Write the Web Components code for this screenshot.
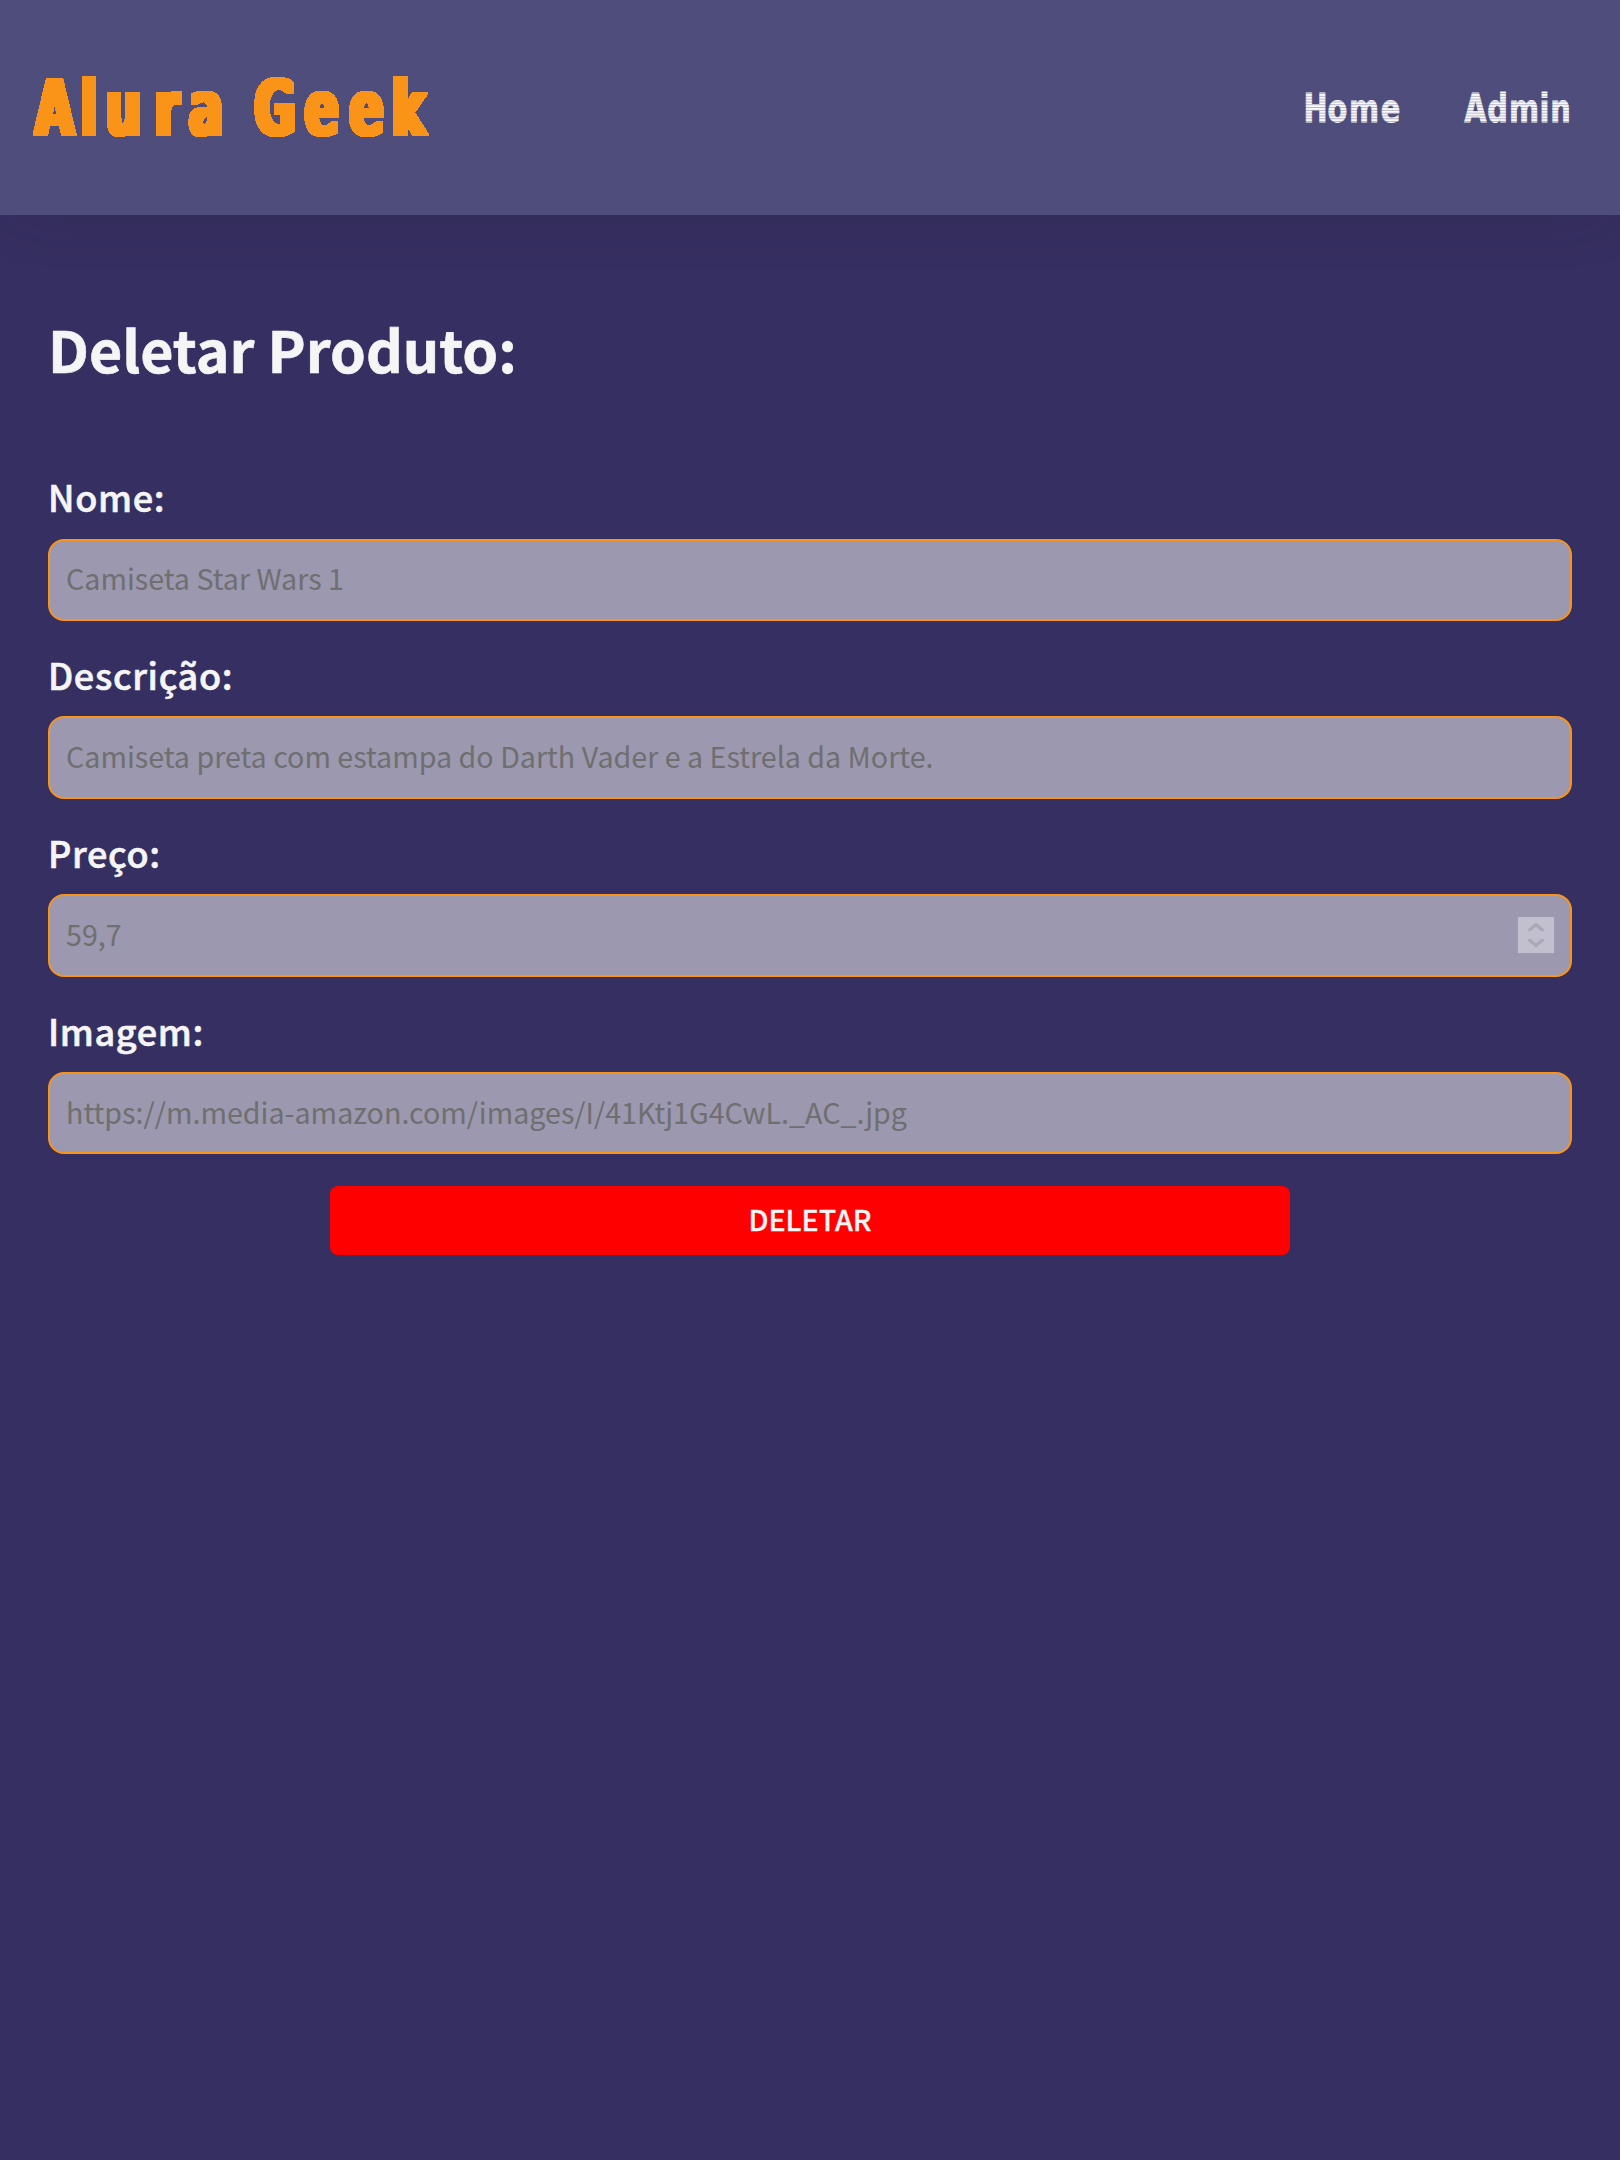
<!DOCTYPE html>
<html lang="pt-BR">
<head>
<meta charset="utf-8">
<title>Alura Geek</title>
<style>
body{margin:0;min-height:2160px;background:#362f61;color:#f5f5f5;font-family:"Noto Sans CJK JP","Noto Sans",sans-serif}
</style>
</head>
<body>
<geek-header></geek-header>
<product-form heading="Deletar Produto:">
<form-field label="Nome:" value="Camiseta Star Wars 1"></form-field>
<form-field label="Descrição:" value="Camiseta preta com estampa do Darth Vader e a Estrela da Morte."></form-field>
<form-field label="Preço:" value="59,7" spinner></form-field>
<form-field label="Imagem:" value="https://m.media-amazon.com/images/I/41Ktj1G4CwL._AC_.jpg"></form-field>
<action-button slot="action">DELETAR</action-button>
</product-form>
<script>
/* Glyph centres along the line, divided by the horizontal squeeze. */
const spots=(squeeze,list)=>list.map(v=>(v/squeeze).toFixed(2)).join(' ');
/* Menu word filled with thin scan lines. */
const scanWord=(word,width,centres)=>`<svg width="${width+20}" height="56" viewBox="-10 -4 ${width+20} 56"><defs><pattern id="scan-${word}" width="4" height="2.8" patternUnits="userSpaceOnUse" y="12"><rect width="4" height="2.8" fill="#9e9db7"/><rect width="4" height="2.1" fill="#f9f9f9"/></pattern></defs><text transform="scale(.84 1)" y="40" font-size="38.2" fill="url(#scan-${word})" stroke="url(#scan-${word})" stroke-width=".8" x="${spots(.84,centres)}">${word}</text></svg>`;
class GeekHeader extends HTMLElement{
  constructor(){super();this.attachShadow({mode:'open'}).innerHTML=`<style>
:host{display:flex;justify-content:space-between;align-items:flex-start;box-sizing:border-box;height:215px;padding:58px 40px 0 24px;background:#4f4d7c;box-shadow:0 16px 50px -10px rgba(30,30,40,.12)}
svg{display:block}
text{font-family:"DejaVu Sans Condensed","DejaVu Sans",sans-serif;font-stretch:condensed;font-weight:bold;text-anchor:middle}
nav{display:flex;gap:42px;padding-top:20px}
</style>
<svg width="430" height="104" viewBox="-10 -10 430 104">
<filter id="blocky" filterUnits="userSpaceOnUse" x="-10" y="-10" width="430" height="104" color-interpolation-filters="sRGB"><feMorphology operator="dilate" radius="3 1"/><feComponentTransfer><feFuncA type="discrete" tableValues="0 1"/></feComponentTransfer></filter>
<g filter="url(#blocky)"><text transform="scale(.73 1)" y="67" font-size="76" fill="#fa9418" x="${spots(.73,[20.5,55,89.5,133,172,206,241,288,332.5,374.5])}">Alura Geek</text></g></svg>
<nav>${scanWord('Home',98,[11.5,33.5,60,86.5])}${scanWord('Admin',106,[11.5,33.5,60,80.5,96.5])}</nav>`}
}
class ProductForm extends HTMLElement{
  constructor(){super();this.attachShadow({mode:'open'}).innerHTML=`<style>
:host{display:block;padding:94px 48px 0}
h1{margin:0 0 86px;font-size:57.3px;line-height:80px;font-weight:700;-webkit-text-stroke:.6px #f5f5f5}
section{display:flex;flex-direction:column;gap:32px}
</style><h1></h1><section><slot></slot><slot name="action"></slot></section>`}
  connectedCallback(){this.shadowRoot.querySelector('h1').textContent=this.getAttribute('heading')}
}
class FormField extends HTMLElement{
  constructor(){super();this.attachShadow({mode:'open'}).innerHTML=`<style>
:host{display:flex;flex-direction:column;justify-content:space-between;height:145.85px}
label{font-size:36.1px;line-height:43px;font-weight:500;letter-spacing:.65px;-webkit-text-stroke:.6px #f5f5f5}
.box{display:flex;align-items:center;justify-content:space-between;box-sizing:border-box;height:82.25px;padding:0 16px;border:2px solid #fa9418;border-radius:16px;background:#9b98b0;color:#6f6f6f;font-size:28.65px;line-height:40px;white-space:nowrap}
.box span{padding-bottom:3px}
svg{width:36px;height:36px;background:#c2bfce}
</style><label></label><div class="box"><span></span></div>`}
  connectedCallback(){
    const r=this.shadowRoot;
    r.querySelector('label').textContent=this.getAttribute('label');
    r.querySelector('span').textContent=this.getAttribute('value');
    if(this.hasAttribute('spinner'))r.querySelector('.box').insertAdjacentHTML('beforeend','<svg viewBox="0 0 36 36" fill="none" stroke="#aaa8b7" stroke-width="3"><path d="M11.5 14V13L18 7.5L24.5 13V14M11.5 22V23L18 28.5L24.5 23V22"/></svg>');
  }
}
class ActionButton extends HTMLElement{
  constructor(){super();this.attachShadow({mode:'open'}).innerHTML=`<style>
:host{display:block;align-self:center;width:960px}
button{display:block;width:100%;height:69px;border:0;border-radius:8px;padding:0 0 3px;background:red;color:#f5f5f5;font:500 28.65px/66px "Noto Sans CJK JP","Noto Sans",sans-serif;-webkit-text-stroke:.3px #f5f5f5}
</style><button><slot></slot></button>`}
}
customElements.define('geek-header',GeekHeader);
customElements.define('product-form',ProductForm);
customElements.define('form-field',FormField);
customElements.define('action-button',ActionButton);
</script>
</body>
</html>
